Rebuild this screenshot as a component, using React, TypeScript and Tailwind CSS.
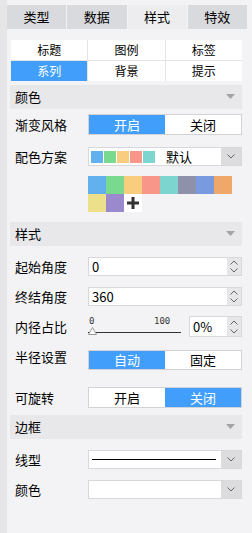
import * as React from 'react'

const font = { fontFamily: '"Noto Sans CJK SC", "Liberation Sans", sans-serif' }

const palette = [
  '#62b0ee', '#78d98f', '#f8cd7e', '#f8968a', '#7dd5cf', '#8f90aa', '#7a9ae0', '#f0a86a',
  '#ece08a', '#9a89cc',
]

function Caret() {
  return (
    <svg width="9" height="6" viewBox="0 0 9 6" className="shrink-0">
      <path d="M0 0 L9 0 L4.5 5 Z" fill="#a3a3a6" />
    </svg>
  )
}

function Chevron({ up = false }: { up?: boolean }) {
  return (
    <svg width="8" height="5" viewBox="0 0 8 5">
      <path d={up ? 'M0.5 4.5 L4 1 L7.5 4.5' : 'M0.5 0.5 L4 4 L7.5 0.5'} fill="none" stroke="#666" strokeWidth="1" />
    </svg>
  )
}

function Section({ title, className = '' }: { title: string; className?: string }) {
  return (
    <div className={`ml-[3px] w-[232px] h-[24px] bg-[#e8e8ea] flex items-center justify-between pl-[5px] pr-[7px] text-[13px] text-black ${className}`}>
      <span>{title}</span>
      <Caret />
    </div>
  )
}

function Row({ label, className = '', children }: { label: string; className?: string; children: React.ReactNode }) {
  return (
    <div className={`flex items-center ${className}`}>
      <div className="w-[81px] pl-[8px] text-[13px] text-black leading-none">{label}</div>
      <div className="w-[154px]">{children}</div>
    </div>
  )
}

function Toggle({ left, right, active, h = 'h-[21px]' }: { left: string; right: string; active: 0 | 1; h?: string }) {
  return (
    <div className={`flex ${h} border border-[#d3d3d7] bg-white text-[13px]`}>
      <div className={`flex-1 flex items-center justify-center ${active === 0 ? 'bg-[#419ffb] text-white' : 'text-black'}`}>{left}</div>
      <div className={`flex-1 flex items-center justify-center ${active === 1 ? 'bg-[#419ffb] text-white' : 'text-black'}`}>{right}</div>
    </div>
  )
}

function Select({ children }: { children?: React.ReactNode }) {
  return (
    <div className="flex h-[19px] border border-[#d8d8dc] bg-white">
      <div className="flex-1 flex items-center pl-[2px]">{children}</div>
      <div className="w-[20px] bg-[#dcdcdf] flex items-center justify-center">
        <Chevron />
      </div>
    </div>
  )
}

function NumberInput({ value, w = 'w-full' }: { value: string; w?: string }) {
  return (
    <div className={`flex h-[19px] ${w} border border-[#d8d8dc] bg-white`}>
      <div className="flex-1 flex items-center pl-[3px] text-[13px] text-black">{value}</div>
      <div className="w-[14px] bg-[#e6e6e9] flex flex-col items-center justify-center gap-[3px]">
        <Chevron up />
        <Chevron />
      </div>
    </div>
  )
}

export default function App() {
  const tabs = ['类型', '数据', '样式', '特效']
  const subTabs = ['标题', '图例', '标签', '系列', '背景', '提示']

  return (
    <div className="w-[252px] h-[533px] flex bg-[#f3f3f5] overflow-hidden" style={font}>
      <div className="w-[7px] bg-[#e6e6e8] shrink-0" />
      <div className="flex-1 flex flex-col">
        {/* top tabs */}
        <div className="mt-[5px] grid grid-cols-4 gap-px w-[240px] h-[24px]">
          {tabs.map((t, i) => (
            <div
              key={t}
              className={`flex items-center justify-center text-[13px] text-black ${i === 2 ? 'bg-[#ededef]' : 'bg-[#d9dadd]'}`}
            >
              {t}
            </div>
          ))}
        </div>

        {/* sub tabs */}
        <div className="mt-[11px] ml-[4px] w-[231px] grid grid-cols-3 gap-px bg-[#e4e4e6]">
          {subTabs.map((t, i) => (
            <div
              key={t}
              className={`h-[20px] flex items-center justify-center text-[12px] ${i === 3 ? 'bg-[#419ffb] text-white' : 'bg-white text-black'}`}
            >
              {t}
            </div>
          ))}
        </div>

        <Section title="颜色" className="mt-[4px]" />

        <Row label="渐变风格" className="mt-[5px]">
          <Toggle left="开启" right="关闭" active={0} />
        </Row>

        <Row label="配色方案" className="mt-[12px]">
          <Select>
            <div className="flex gap-px">
              {palette.slice(0, 5).map(c => (
                <div key={c} className="w-[12px] h-[12px]" style={{ backgroundColor: c }} />
              ))}
            </div>
            <span className="ml-[11px] text-[13px] text-black">默认</span>
          </Select>
        </Row>

        <div className="mt-[10px] ml-[81px] w-[144px] flex flex-wrap">
          {palette.map(c => (
            <div key={c} className="w-[18px] h-[18px]" style={{ backgroundColor: c }} />
          ))}
          <div className="w-[18px] h-[18px] bg-white flex items-center justify-center">
            <svg width="14" height="14" viewBox="0 0 14 14">
              <path d="M7 1 V13 M1 7 H13" stroke="#333" strokeWidth="3" />
            </svg>
          </div>
        </div>

        <Section title="样式" className="mt-[10px]" />

        <Row label="起始角度" className="mt-[11px]">
          <NumberInput value="0" />
        </Row>

        <Row label="终结角度" className="mt-[11px]">
          <NumberInput value="360" />
        </Row>

        <Row label="内径占比" className="mt-[10px]">
          <div className="flex items-center h-[21px]">
            <div className="relative w-[93px] h-[21px]">
              <span className="absolute left-[1px] top-[-1px] text-[9px] text-[#333]" style={{ fontFamily: '"DejaVu Sans Mono", monospace' }}>0</span>
              <span className="absolute left-[66px] top-[-1px] text-[9px] text-[#333]" style={{ fontFamily: '"DejaVu Sans Mono", monospace' }}>100</span>
              <div className="absolute left-0 right-0 top-[16px] h-px bg-[#333]" />
              <svg className="absolute left-0 top-[11px]" width="9" height="8" viewBox="0 0 9 8">
                <path d="M0.5 7.5 L4.5 0.5 L8.5 7.5 Z" fill="#fff" stroke="#999" strokeWidth="1" />
              </svg>
            </div>
            <div className="ml-[8px] flex-1">
              <div className="flex h-[21px] border border-[#d8d8dc] bg-white">
                <div className="flex-1 flex items-center pl-[3px] text-[13px] text-black">0%</div>
                <div className="w-[14px] bg-[#e6e6e9] flex flex-col items-center justify-center gap-[4px]">
                  <Chevron up />
                  <Chevron />
                </div>
              </div>
            </div>
          </div>
        </Row>

        <Row label="半径设置" className="mt-[13px] !items-start">
          <Toggle left="自动" right="固定" active={0} h="h-[20px]" />
        </Row>

        <Row label="可旋转" className="mt-[17px]">
          <Toggle left="开启" right="关闭" active={1} />
        </Row>

        <Section title="边框" className="mt-[7px]" />

        <Row label="线型" className="mt-[11px]">
          <Select>
            <div className="ml-[1px] w-[124px] h-px bg-black" />
          </Select>
        </Row>

        <Row label="颜色" className="mt-[11px]">
          <Select />
        </Row>
      </div>
    </div>
  )
}
